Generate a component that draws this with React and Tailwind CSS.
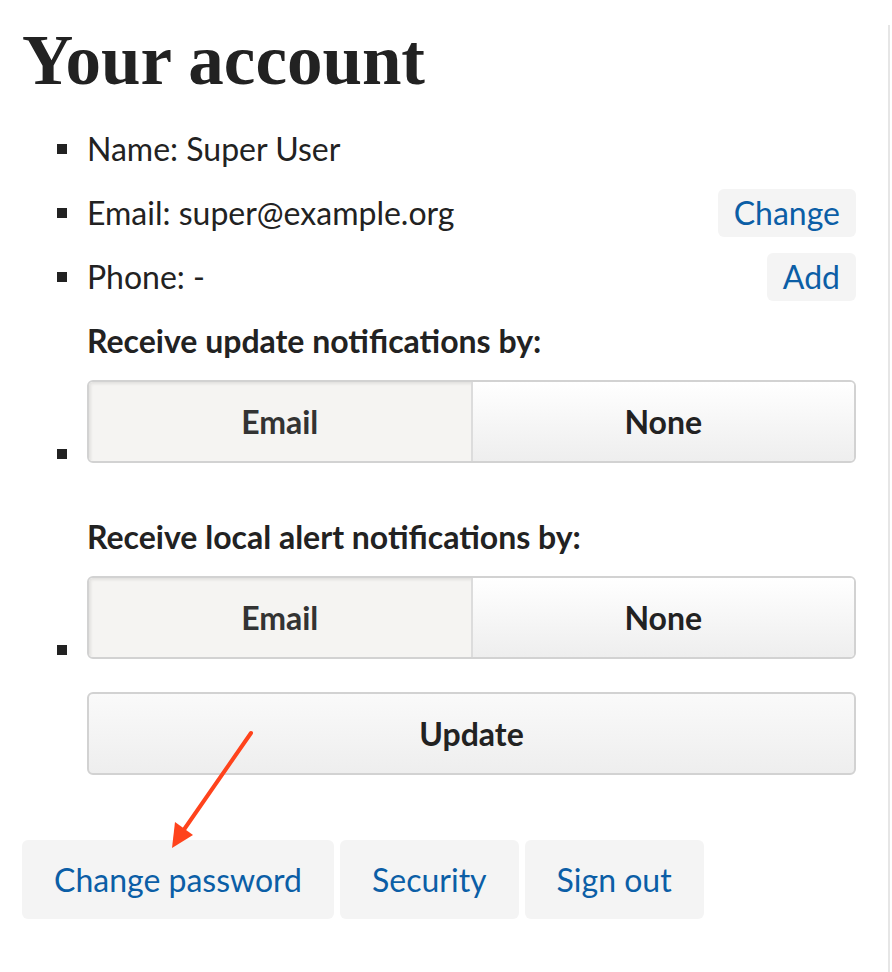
import React from "react";

const lato = { fontFamily: "Lato, 'Open Sans', sans-serif" };

function Bullet({ className = "" }) {
  return <span className={`block h-[10px] w-[10px] shrink-0 bg-[#222] ${className}`} />;
}

function LinkButton({ children, className = "" }) {
  return (
    <button
      type="button"
      className={`rounded-md bg-[#f4f4f4] text-[#0b5ea6] ${className}`}
    >
      {children}
    </button>
  );
}

function Segmented() {
  return (
    <div className="flex h-[83px] overflow-hidden rounded-md border-2 border-[#d2d2d2]">
      <button
        type="button"
        className="flex-1 bg-[#f5f4f2] text-[32px] font-bold text-[#333] shadow-[inset_2px_2px_3px_rgba(0,0,0,0.08)]"
      >
        Email
      </button>
      <button
        type="button"
        className="flex-1 border-l-2 border-[#dcdcdc] bg-gradient-to-b from-white to-[#eeeeee] text-[32px] font-bold text-[#222]"
      >
        None
      </button>
    </div>
  );
}

export default function App() {
  return (
    <div className="min-h-[972px] bg-white" style={lato}>
      <div className="relative min-h-[972px] w-[890px] border-r-2 border-[#e6e6e6] pl-[22px] pr-[32px] text-[#222]">
        <h1
          className="mt-[25px] text-[71px] font-bold leading-none"
          style={{ fontFamily: "'Liberation Serif', serif" }}
        >
          Your account
        </h1>

        <ul className="mt-[21px]">
          <li className="flex h-16 items-center text-[32px]">
            <Bullet className="ml-[35px] mr-[20px]" />
            <span>Name: Super User</span>
          </li>
          <li className="flex h-16 items-center text-[32px]">
            <Bullet className="ml-[35px] mr-[20px]" />
            <span className="flex-1">Email: super@example.org</span>
            <LinkButton className="h-12 px-[16px] text-[32px]">Change</LinkButton>
          </li>
          <li className="flex h-16 items-center text-[32px]">
            <Bullet className="ml-[35px] mr-[20px]" />
            <span className="flex-1">Phone: -</span>
            <LinkButton className="h-12 px-[16px] text-[32px]">Add</LinkButton>
          </li>
          <li className="flex items-end">
            <Bullet className="mb-[4px] ml-[35px] mr-[20px]" />
            <div className="flex-1">
              <div className="flex h-16 items-center text-[32px] font-bold">
                Receive update notifications by:
              </div>
              <div className="mt-[7px]">
                <Segmented />
              </div>
            </div>
          </li>
          <li className="mt-[42px] flex items-end">
            <Bullet className="mb-[4px] ml-[35px] mr-[20px]" />
            <div className="flex-1">
              <div className="flex h-16 items-center text-[32px] font-bold">
                Receive local alert notifications by:
              </div>
              <div className="mt-[7px]">
                <Segmented />
              </div>
            </div>
          </li>
        </ul>

        <div className="ml-[65px] mt-[33px]">
          <button
            type="button"
            className="h-[83px] w-full rounded-md border-2 border-[#d2d2d2] bg-gradient-to-b from-[#fafafa] to-[#eeeeee] text-[32px] font-bold text-[#222]"
          >
            Update
          </button>
        </div>

        <div className="mt-[65px] flex gap-[6px]">
          <LinkButton className="h-[79px] px-[32px] text-[32px]">Change password</LinkButton>
          <LinkButton className="h-[79px] px-[32px] text-[32px]">Security</LinkButton>
          <LinkButton className="h-[79px] px-[32px] text-[32px]">Sign out</LinkButton>
        </div>

        {/* annotation arrow */}
        <svg
          className="pointer-events-none absolute left-0 top-0"
          width="892"
          height="972"
          viewBox="0 0 892 972"
        >
          <line x1="251" y1="708" x2="183" y2="806" stroke="#ff431c" strokeWidth="4" strokeLinecap="round" />
          <polygon points="172,823 175,797 193,810" fill="#ff431c" />
        </svg>
      </div>
    </div>
  );
}
